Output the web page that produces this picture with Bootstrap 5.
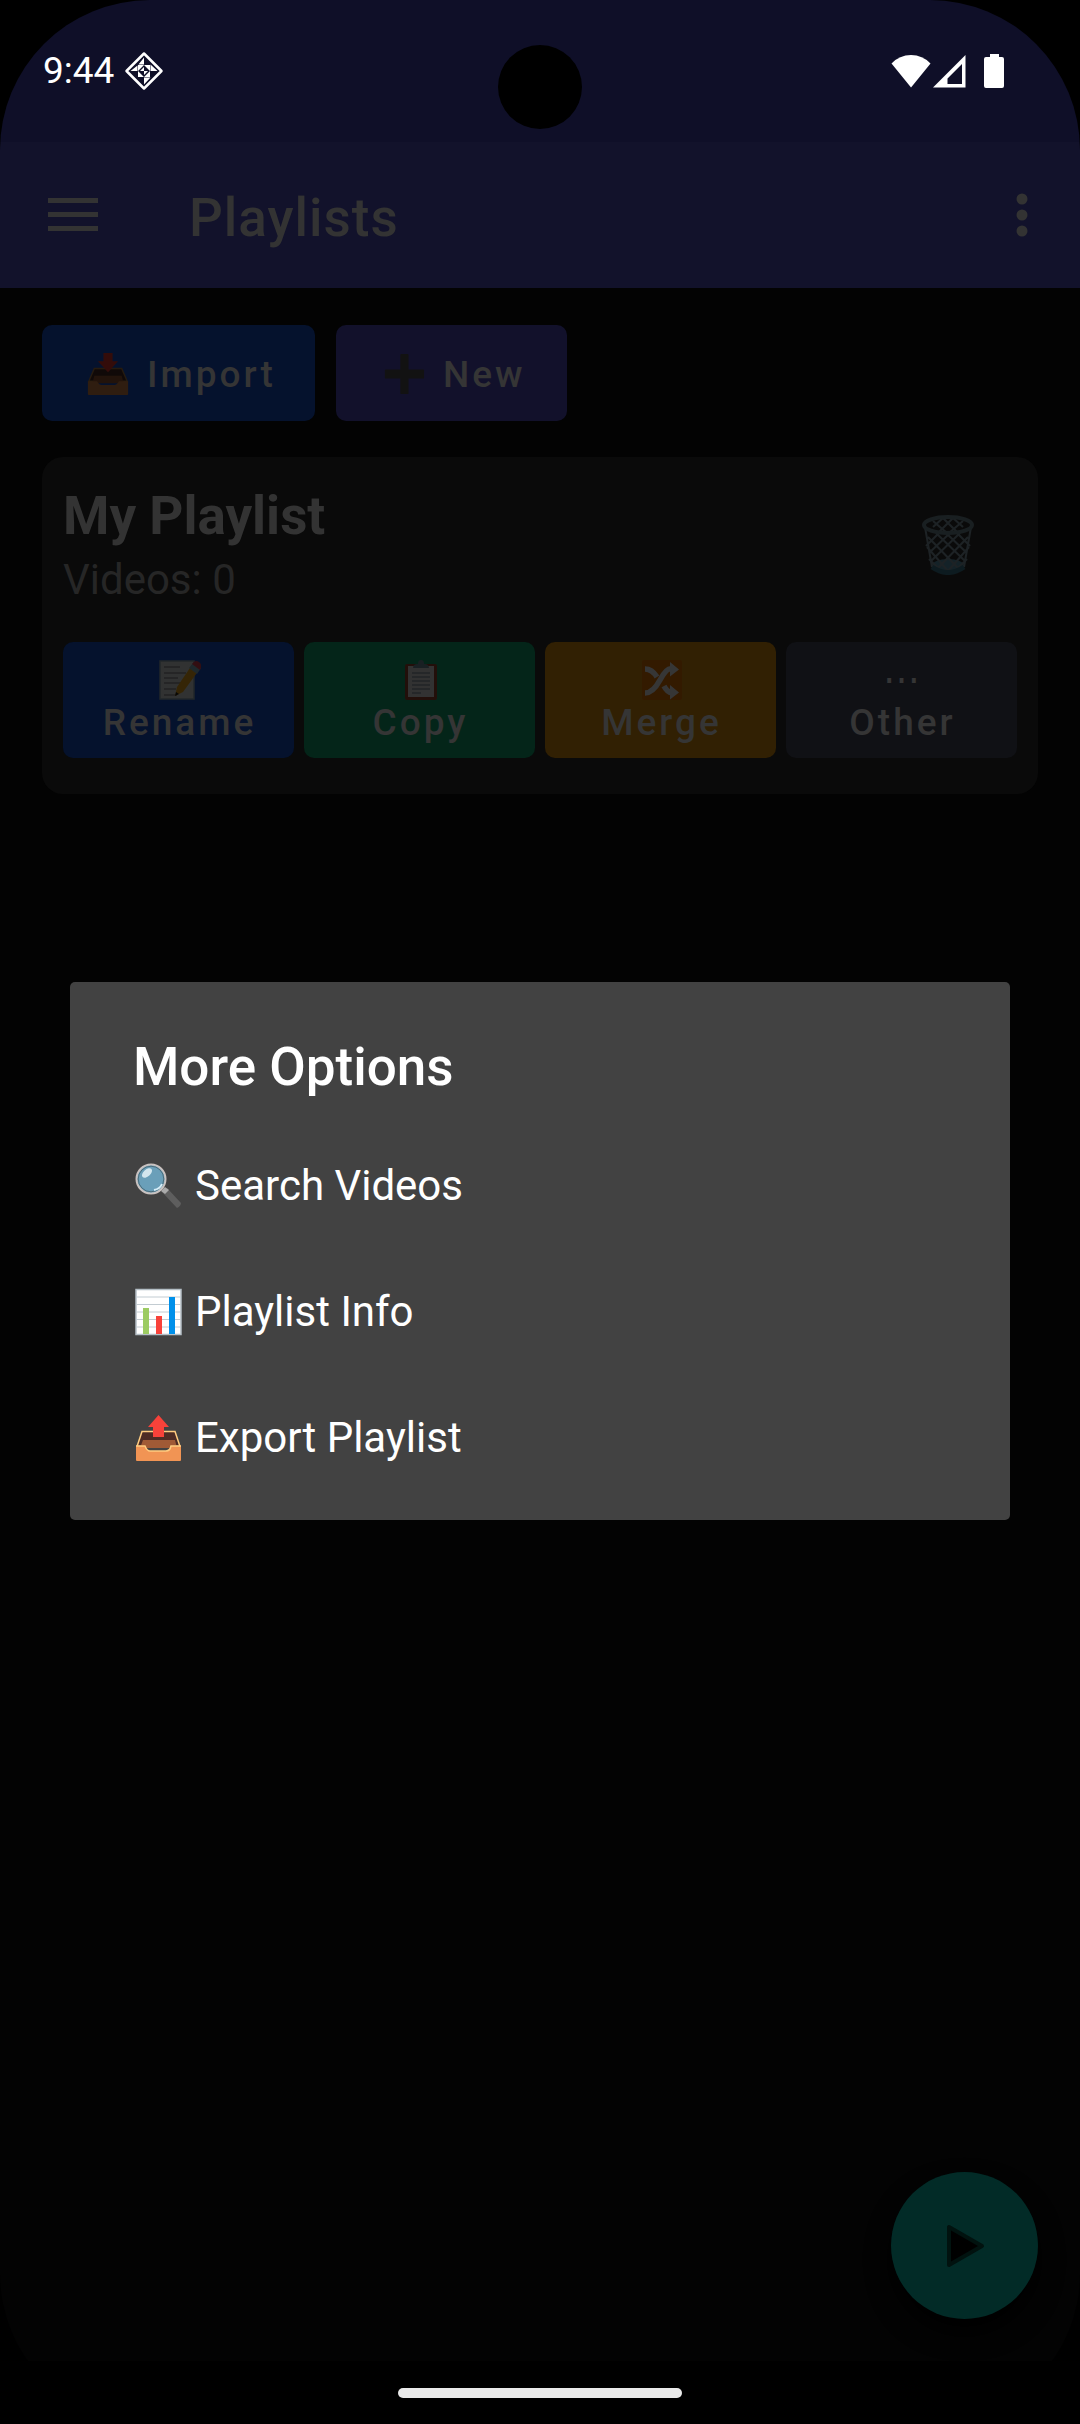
<!DOCTYPE html>
<html lang="en" data-bs-theme="dark">
<head>
<meta charset="utf-8">
<meta name="viewport" content="width=device-width, initial-scale=1">
<title>Playlists</title>
<link href="https://cdn.jsdelivr.net/npm/bootstrap@5.3.0/dist/css/bootstrap.min.css" rel="stylesheet">
<style>
  body { background: #000; font-family: Roboto, "Noto Sans", sans-serif; color: #333; }
  .phone { min-height: 100vh; background: #030303; border-radius: 150px; overflow: hidden; }
  .status-bar { height: 142px; background: #0f0f28; padding: 0 75px 0 43px; color: #fff; font-size: 37px; line-height: 44px; }
  .status-left { gap: 10px; }
  .camera { width: 84px; height: 84px; top: 45px; background: #000; }
  .app-bar { height: 146px; background: #12122b; padding: 0 42px 0 48px; }
  .app-bar h1, .sheet-title, .list-name { font-size: 53px; line-height: 62px; margin: 0; }
  .app-bar h1 { font-weight: 500; letter-spacing: 1px; margin-left: 91px; padding-top: 5px; color: #333; }
  .icon-btn { background: none; border: 0; padding: 0; color: inherit; line-height: 0; }
  .content { padding: 37px 42px 0; }
  .top-actions { gap: 21px; }
  .act { border: 0; border-radius: 10px; color: #353535; font-size: 37px; line-height: 43px; font-weight: 500; letter-spacing: 3px; }
  .act-wide { height: 96px; min-width: 231px; padding: 2px 39px 0 45px; gap: 18px; }
  .act-tile { height: 116px; flex: 1 1 0; min-width: 0; padding: 2px 0 0 2px; }
  .act svg { width: 42px; height: 42px; flex: none; }
  .more-dots { height: 42px; line-height: 42px; }
  .blue { background: #05122d; } .violet { background: #12112b; } .green { background: #042519; }
  .amber { background: #312003; } .slate { background: #101115; }
  .dim { filter: brightness(.21); }
  .list-card { background: #0a0a0a; border-radius: 21px; margin-top: 36px; padding: 28px 21px 36px; }
  .list-name { font-weight: 700; color: #333; }
  .list-meta { font-size: 42px; line-height: 50px; color: #262626; margin: 8px 0 0; }
  .tiles { gap: 10px; margin-top: 37px; }
  .trash { margin-right: 42px; }
  .sheet { background: #424242; border-radius: 5px; width: calc(100% - 140px); top: 982px; left: 70px; padding: 54px 0 19px; color: #fff; }
  .sheet-title { font-weight: 500; padding: 0 63px; margin-bottom: 25px; color: #fff; }
  .sheet a { height: 126px; padding: 0 65px; gap: 12px; font-size: 42px; line-height: 50px; color: #fff; text-decoration: none; }
  .fab { width: 147px; height: 147px; right: 42px; bottom: 105px; border: 0; background: #022b27; box-shadow: 0 14px 24px #000; }
  .nav-area { height: 63px; background: #000; }
  .nav-pill { width: 284px; height: 10px; background: #eaeaea; }
</style>
<script src="https://cdn.jsdelivr.net/npm/bootstrap@5.3.0/dist/js/bootstrap.bundle.min.js"></script>
</head>
<body>
<div class="phone position-relative d-flex flex-column">
  <header>
    <div class="status-bar d-flex align-items-center justify-content-between">
      <div class="status-left d-flex align-items-center">
        <span>9:44</span>
        <svg width="40" height="40" viewBox="0 0 40 40" aria-hidden="true"><path d="M20 2.500L37.500 20 20 37.500 2.500 20Z" fill="none" stroke="#fff" stroke-width="2.500" stroke-linejoin="round"/><path d="M20 6.500V13.500H14.500zM26.500 13.500L33.500 20H26.500zM20 33.500V26.500h6.500zM6.500 20L13.500 14.500V20z" fill="#fff"/><path d="M14 14h6L14 20zM20 14h6v6zM14 20l6 6H14zM26 20v6H20zM20 16v4h-4zM20 20h4l-4 4z" fill="#fff"/></svg>
      </div>
      <div class="d-flex align-items-center">
        <svg width="40" height="34" viewBox="0 0 40 34" aria-hidden="true"><path d="M20 33.500L.5 9.500Q8.500 1 20 1t19.500 8.500Z" fill="#fff"/></svg>
        <svg width="36" height="34" viewBox="0 0 36 34" aria-hidden="true"><path fill-rule="evenodd" d="M2 33.500L34.500 1v32.500ZM16.500 30H31V10L16.500 24.500Z" fill="#fff"/></svg>
        <svg class="ms-3" width="22" height="36" viewBox="0 0 22 36" aria-hidden="true"><path d="M7 1h9v3h3q2 0 2 2v27q0 2-2 2H3q-2 0-2-2V6q0-2 2-2h4z" fill="#fff"/></svg>
      </div>
    </div>
    <div class="camera position-absolute start-50 translate-middle-x rounded-circle"></div>
    <nav class="app-bar d-flex align-items-center" aria-label="Main">
      <button class="icon-btn" type="button" aria-label="Open menu"><svg width="50" height="34" viewBox="0 0 50 34"><path d="M0 0h50v5H0zM0 14h50v5H0zM0 28h50v5H0z" fill="#333"/></svg></button>
      <h1>Playlists</h1>
      <button class="icon-btn ms-auto" type="button" aria-label="More"><svg width="32" height="46" viewBox="0 0 32 46"><g fill="#333"><circle cx="16" cy="7" r="5.500"/><circle cx="16" cy="23" r="5.500"/><circle cx="16" cy="39" r="5.500"/></g></svg></button>
    </nav>
  </header>

  <main class="content flex-grow-1">
    <div class="top-actions d-flex">
      <button type="button" class="act act-wide blue d-flex align-items-center justify-content-center">
        <svg class="dim" viewBox="0 0 46 46"><path d="M8 17h30l6 14H2z" fill="#4e2c25" stroke="#b58048" stroke-width="1.500"/><path d="M8 25h30l2 8H6z" fill="#a05a36"/><path d="M1 31h10q2 4 5 4h14q3 0 5-4h10v14q0 1-1 1H2q-1 0-1-1z" fill="#e08a4a"/><path d="M18 0h10v9h6L23 21 12 9h6z" fill="#f33b2f"/></svg>Import</button>
      <button type="button" class="act act-wide violet d-flex align-items-center justify-content-center">
        <svg class="dim" viewBox="0 0 46 46"><path d="M20 1h7q1 0 1 1v16h16q1 0 1 1v8q0 1-1 1H28v16q0 1-1 1h-7q-1 0-1-1V28H3q-1 0-1-1v-8q0-1 1-1h16V2q0-1 1-1z" fill="#555"/></svg>New</button>
    </div>

    <section class="list-card">
      <div class="d-flex align-items-center justify-content-between">
        <div>
          <h2 class="list-name">My Playlist</h2>
          <p class="list-meta">Videos: 0</p>
        </div>
        <button class="icon-btn trash" type="button" aria-label="Delete playlist">
          <svg class="dim" width="54" height="60" viewBox="0 0 54 60"><ellipse cx="27" cy="51" rx="16" ry="7" fill="#5fa3bd"/><g fill="none" stroke="#8ba3ae" stroke-width="2"><path d="M4 12l7 40M50 12l-7 40M7 22l30 31M6 32l21 24M8 44l9 9M15 18l29 28M25 18l21 20M36 18l13 13M47 22L17 53M48 32L27 56M46 44l-9 9M39 18L10 46M29 18L8 38M18 18L5 31M12 6l14 12M22 3l14 14M32 3l10 9M42 6L28 18M32 3L18 17M22 3L12 12"/></g><ellipse cx="27" cy="10" rx="24" ry="8" fill="none" stroke="#78929e" stroke-width="4"/><path d="M11 52q16 11 32 0" fill="none" stroke="#3f7f96" stroke-width="5"/></svg>
        </button>
      </div>
      <div class="tiles d-flex">
        <button type="button" class="act act-tile blue d-flex flex-column align-items-center justify-content-center">
          <svg class="dim" viewBox="0 0 42 42"><path d="M1 2h34v38H1z" fill="#e8eef0" stroke="#9fb8c4" stroke-width="1.500"/><path d="M5 8h16M5 14h22M5 19h14M5 24h20M5 30h12M5 36h13" stroke="#777"/><path d="M16 37l2-9L33 6l7 5-16 22z" fill="#fbb21b"/><path d="M30 9l4-5 8 5-4 6z" fill="#8dbdd0"/><path d="M33 5q3-5 7-2 4 3 1 8z" fill="#ef4455"/><path d="M16 37l1-4 3 2z" fill="#222"/></svg>Rename</button>
        <button type="button" class="act act-tile green d-flex flex-column align-items-center justify-content-center">
          <svg class="dim" viewBox="0 0 42 42"><rect x="5" y="5" width="32" height="36" rx="2" fill="#a4472f"/><path d="M8 7h26v31H8z" fill="#eee"/><path d="M12 14h18M12 18h18M12 22h18M12 26h18M12 30h18M12 34h9" stroke="#789"/><path d="M13 9q0-4 5-4 0-4 3-4t3 4q5 0 5 4z" fill="#7899a8"/></svg>Copy</button>
        <button type="button" class="act act-tile amber d-flex flex-column align-items-center justify-content-center">
          <svg class="dim" viewBox="0 0 42 42"><rect x="1" y="1" width="40" height="40" rx="2" fill="#f27a00"/><path d="M4 10q7 0 12 8M4 34q8 0 15-13T31 10M23 27q3 6 8 7" fill="none" stroke="#fff" stroke-width="5.500"/><path d="M29 3l9 7.500-9 7zM29 26l9 7.500-9 7z" fill="#fff"/></svg>Merge</button>
        <button type="button" class="act act-tile slate d-flex flex-column align-items-center justify-content-center">
          <span class="more-dots">⋯</span>Other</button>
      </div>
    </section>
  </main>

  <button class="fab position-absolute rounded-circle d-flex align-items-center justify-content-center p-0" type="button" aria-label="Play">
    <svg width="42" height="46" viewBox="0 0 42 46"><path d="M5 4v38L38 23z" fill="#000" stroke="#01120f" stroke-width="4" stroke-linejoin="round"/></svg>
  </button>

  <div class="sheet position-absolute" role="dialog" aria-labelledby="sheetTitle">
    <h2 class="sheet-title" id="sheetTitle">More Options</h2>
    <a href="#" class="d-flex align-items-center">
      <svg width="48" height="48" viewBox="0 0 48 48"><path d="M27 30l5-4 14 15q0 3-4 5z" fill="#5e5e5e"/><path d="M26 29l4-4 4 3-4 4z" fill="#aaa"/><circle cx="16" cy="17" r="14.500" fill="#6a9fb9" stroke="#c9c2c0" stroke-width="2"/><circle cx="16" cy="17" r="12.800" fill="none" stroke="#4b6c7a"/><ellipse cx="12" cy="11" rx="6" ry="3.500" transform="rotate(-42 12 11)" fill="#d3e6ee"/><path d="M19 28q6-1 8-6" fill="none" stroke="#d6eef8" stroke-width="2"/></svg>Search Videos</a>
    <a href="#" class="d-flex align-items-center">
      <svg width="48" height="48" viewBox="0 0 48 48"><path d="M1 1.500h45v45H1z" fill="#fff" stroke="#b5bfc6" stroke-width="1.500"/><path d="M1 9h45M1 16.500h45M1 24h45M1 31.500h45M1 39h45" stroke="#c3ccd2"/><path d="M8 20h6v26H8z" fill="#9ccb62"/><path d="M21 28h6v18h-6z" fill="#f8423a"/><path d="M34 9h6v37h-6z" fill="#0090ea"/></svg>Playlist Info</a>
    <a href="#" class="d-flex align-items-center">
      <svg width="48" height="48" viewBox="0 0 48 48"><path d="M7 17.500h33l5 15H2z" fill="#4e2c25" stroke="#ffcc80" stroke-width="1.500"/><path d="M8 26h32l2 8H5z" fill="#a05a36"/><path d="M1 32h9q2 5 5 5h16q4 0 5-5h10v14q0 1-1 1H2q-1 0-1-1z" fill="#f19454"/><path d="M1 32h9q2 5 5 5h16q4 0 5-5h10" fill="none" stroke="#ffcc80" stroke-width="1.500"/><path d="M18 23V13h-5L23.500 1 34 13h-5v10z" fill="#f8423a"/></svg>Export Playlist</a>
  </div>

  <div class="nav-area d-flex align-items-center justify-content-center"><div class="nav-pill rounded-pill"></div></div>
</div>
</body>
</html>
